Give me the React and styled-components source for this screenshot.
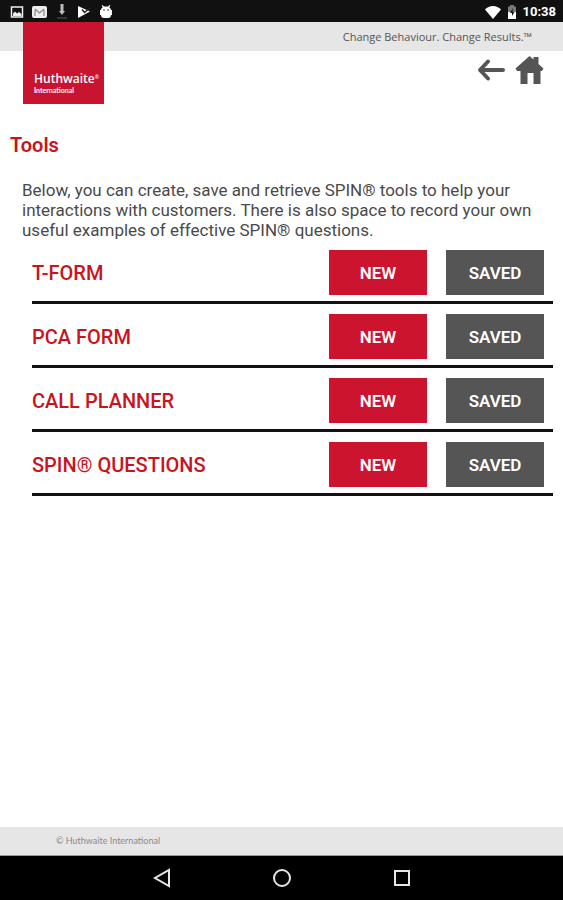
import React from 'react';
import styled, { createGlobalStyle } from 'styled-components';

const GlobalStyle = createGlobalStyle`
  * {
    box-sizing: border-box;
  }

  body {
    margin: 0;
    background: #ffffff;
    font-family: Roboto, sans-serif;
  }
`;

const Screen = styled.div`
  min-height: 100vh;
  display: flex;
  flex-direction: column;
`;

const StatusBar = styled.div`
  display: flex;
  align-items: center;
  justify-content: space-between;
  height: 22px;
  padding: 2px 7px 0 10px;
  background: #111111;
  color: #ffffff;
`;

const StatusGroup = styled.div`
  display: flex;
  align-items: center;
  gap: ${(props) => props.$gap};

  svg {
    display: block;
  }
`;

const Clock = styled.span`
  font-size: 13px;
  line-height: 16px;
  font-weight: 700;
`;

const Header = styled.header`
  position: relative;
`;

const Tagline = styled.div`
  height: 29px;
  padding-right: 31px;
  background: #e6e6e6;
  color: #555555;
  font-family: 'Open Sans', sans-serif;
  font-size: 11px;
  line-height: 29px;
  text-align: right;
`;

const Logo = styled.div`
  position: absolute;
  top: 0;
  left: 23px;
  width: 81px;
  height: 82px;
  padding: 50px 0 0 11px;
  background: #c8142f;
  color: #ffffff;
  font-family: 'Open Sans', sans-serif;
`;

const LogoName = styled.div`
  display: flex;
  font-size: 12px;
  line-height: 14px;
  font-weight: 600;
`;

const LogoMark = styled.span`
  font-size: 5px;
  line-height: 10px;
`;

const LogoSub = styled.div`
  font-family: Lato, sans-serif;
  font-size: 7px;
  line-height: 8px;
  font-weight: 700;
`;

const HeaderActions = styled.div`
  display: flex;
  justify-content: flex-end;
  gap: 8px;
  padding: 4px 18px 0 0;
`;

const IconButton = styled.button`
  padding: 0;
  border: none;
  background: none;
  cursor: pointer;

  svg {
    display: block;
  }
`;

const Main = styled.main`
  flex: 1;
  padding: 50px 10px 24px;
`;

const Title = styled.h1`
  margin: 0 0 25px;
  color: #c8141e;
  font-size: 20px;
  line-height: 20px;
  font-weight: 600;
`;

const Intro = styled.p`
  margin: 0 12px;
  color: #4a4a4a;
  font-size: 17px;
  line-height: 20px;
`;

const ToolList = styled.ul`
  margin: 0 0 0 22px;
  padding: 0;
  list-style: none;
`;

const ToolRow = styled.li`
  display: flex;
  align-items: center;
  gap: 19px;
  padding: 10px 9px 6px 0;
  border-bottom: 3px solid #111111;
`;

const ToolName = styled.h2`
  flex: 1;
  margin: 0;
  color: #c8141e;
  font-size: 20px;
  line-height: 20px;
  font-weight: 500;
`;

const ToolButton = styled.button`
  width: 98px;
  height: 45px;
  padding: 0;
  border: none;
  background: ${(props) => (props.$primary ? '#cc142f' : '#555555')};
  color: #ffffff;
  font-family: inherit;
  font-size: 17px;
  line-height: 20px;
  font-weight: 600;
  cursor: pointer;
`;

const Footer = styled.footer`
  height: 29px;
  padding-left: 56px;
  border-bottom: 1px solid #999999;
  background: #e6e6e6;
  color: #8a8a8a;
  font-family: Lato, sans-serif;
  font-size: 9px;
  line-height: 28px;
`;

const NavBar = styled.nav`
  display: flex;
  align-items: center;
  justify-content: center;
  gap: 100px;
  height: 44px;
  background: #000000;
`;

const tools = ['T-FORM', 'PCA FORM', 'CALL PLANNER', 'SPIN® QUESTIONS'];

function StatusIcons() {
  return (
    <StatusGroup $gap="8px">
      <svg width="14" height="14" viewBox="0 0 14 14">
        <path d="M1.500 2h11v10h-11z" fill="none" stroke="#eee" strokeWidth="1.500" />
        <path d="M3 11V8.500L5 6.500l2 2L9 7l2.500 2v2z" fill="#eee" />
      </svg>
      <svg width="15" height="14" viewBox="0 0 15 14">
        <rect x="0" y="1" width="15" height="12" rx="2" fill="#eee" />
        <path d="M3 4l4.500 4L12 4M3 5v6M12 5v6" fill="none" stroke="#888" strokeWidth="1.200" />
      </svg>
      <svg width="14" height="16" viewBox="0 0 14 16">
        <path d="M5.500 0h3v7h1.500L7 11 4 7h1.500z" fill="#bbb" />
        <path d="M2 14h10" stroke="#333" strokeWidth="2" />
      </svg>
      <svg width="14" height="14" viewBox="0 0 14 14">
        <path d="M1 1l12 5.500L1 13z" fill="#fff" />
        <path d="M5 4.500l2.500 3L13 3" fill="none" stroke="#222" strokeWidth="1.400" />
      </svg>
      <svg width="14" height="14" viewBox="0 0 14 14">
        <path
          d="M3.500 0L5 1.500h4L10.500 0l.8.6-1 1.700Q12 3.500 12 5h1v5h-1q0 3-3 3H5q-3 0-3-3H1V5h1q0-1.500 1.700-2.700l-1-1.700z"
          fill="#fff"
        />
        <circle cx="5" cy="5" r=".8" fill="#333" />
        <circle cx="9" cy="5" r=".8" fill="#333" />
      </svg>
    </StatusGroup>
  );
}

export default function App() {
  return (
    <>
      <GlobalStyle />
      <Screen>
        <StatusBar>
          <StatusIcons />
          <StatusGroup $gap="6px">
            <svg width="16" height="13" viewBox="0 0 16 13">
              <path d="M8 13L0 3.500C2 1.500 5 0 8 0s6 1.500 8 3.500z" fill="#fff" />
            </svg>
            <svg width="10" height="14" viewBox="0 0 10 14">
              <path d="M1 6h8v8H1z" fill="#fff" />
              <path d="M3 0h4v1.500h2V7H1V1.500h2z" fill="#777" />
              <path d="M6 3L3 8h2v3L7.500 7h-2z" fill="#111" />
            </svg>
            <Clock>10:38</Clock>
          </StatusGroup>
        </StatusBar>

        <Header>
          <Tagline>Change Behaviour. Change Results.™</Tagline>
          <Logo>
            <LogoName>
              Huthwaite
              <LogoMark>®</LogoMark>
            </LogoName>
            <LogoSub>International</LogoSub>
          </Logo>
          <HeaderActions>
            <IconButton aria-label="Back">
              <svg width="30" height="30" viewBox="0 0 30 30">
                <path
                  d="M11 6.500L3 15l8 8.500M4 15h22"
                  fill="none"
                  stroke="#555"
                  strokeWidth="4"
                  strokeLinecap="round"
                  strokeLinejoin="round"
                />
              </svg>
            </IconButton>
            <IconButton aria-label="Home">
              <svg width="30" height="30" viewBox="0 0 30 30">
                <path
                  d="M14.500 1l4 3.500V2h5v7l5 4.500-1.500 2.500h-1.500v13h-7v-11h-6v11h-7V16H2L.5 13.500z"
                  fill="#555"
                />
              </svg>
            </IconButton>
          </HeaderActions>
        </Header>

        <Main>
          <Title>Tools</Title>
          <Intro>
            Below, you can create, save and retrieve SPIN® tools to help your interactions with
            customers. There is also space to record your own useful examples of effective SPIN®
            questions.
          </Intro>
          <ToolList>
            {tools.map((tool) => (
              <ToolRow key={tool}>
                <ToolName>{tool}</ToolName>
                <ToolButton $primary>NEW</ToolButton>
                <ToolButton>SAVED</ToolButton>
              </ToolRow>
            ))}
          </ToolList>
        </Main>

        <Footer>© Huthwaite International</Footer>
        <NavBar>
          <IconButton aria-label="System back">
            <svg width="20" height="20" viewBox="0 0 20 20">
              <path d="M17 2v16L3 10z" fill="none" stroke="#e6e6e6" strokeWidth="2" />
            </svg>
          </IconButton>
          <IconButton aria-label="System home">
            <svg width="20" height="20" viewBox="0 0 20 20">
              <circle cx="10" cy="10" r="8" fill="none" stroke="#e6e6e6" strokeWidth="2" />
            </svg>
          </IconButton>
          <IconButton aria-label="Recent apps">
            <svg width="20" height="20" viewBox="0 0 20 20">
              <rect x="3" y="3" width="14" height="14" fill="none" stroke="#e6e6e6" strokeWidth="2" />
            </svg>
          </IconButton>
        </NavBar>
      </Screen>
    </>
  );
}
